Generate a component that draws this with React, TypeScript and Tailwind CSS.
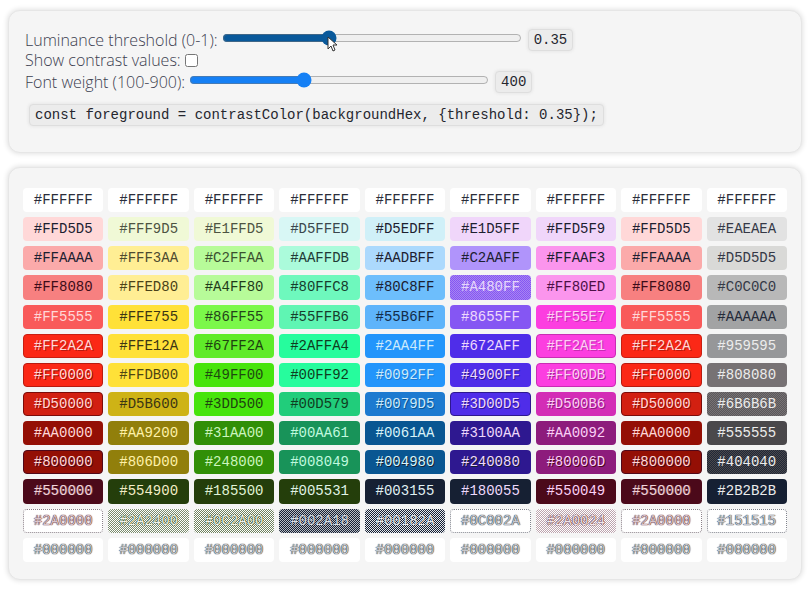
import { useState } from "react";

type Swatch = [hex: string, fill: string];

const dark = "border-transparent text-[#1c2030]";
const white = "border-transparent bg-white text-[#2a2d3a]";
const ghost = "border-transparent bg-white text-[#c8c9cd] [text-shadow:0_0_1px_#222530,0_0_1px_#222530]";
const redGhost = "border-dotted border-[#8a8088] bg-white text-[#d9c6cc] [text-shadow:0_0_1px_#4b091a,0_0_1px_#4b091a]";
const blueGhost = "border-dotted border-[#80838c] bg-white text-[#c8c9d0] [text-shadow:0_0_1px_#162033,0_0_1px_#162033]";

const rows: Swatch[][] = [
  [
    ["#FFFFFF", white],
    ["#FFFFFF", white],
    ["#FFFFFF", white],
    ["#FFFFFF", white],
    ["#FFFFFF", white],
    ["#FFFFFF", white],
    ["#FFFFFF", white],
    ["#FFFFFF", white],
    ["#FFFFFF", white],
  ],
  [
    ["#FFD5D5", `bg-[#ffd8d8] ${dark}`],
    ["#FFF9D5", "border-transparent bg-[#f0f9d6] text-[#4d5342]"],
    ["#E1FFD5", "border-transparent bg-[#f0f9d6] text-[#4d5342]"],
    ["#D5FFED", "border-transparent bg-[#d8f7f5] text-[#3b474d]"],
    ["#D5EDFF", `bg-[#d0f0f8] ${dark}`],
    ["#E1D5FF", `bg-[#f0d6fa] ${dark}`],
    ["#FFD5F9", `bg-[#f0d6fa] ${dark}`],
    ["#FFD5D5", `bg-[#ffd8d8] ${dark}`],
    ["#EAEAEA", "border-transparent bg-[#e2e2e2] text-[#343846]"],
  ],
  [
    ["#FFAAAA", `bg-[#fbaaaa] ${dark}`],
    ["#FFF3AA", "border-transparent bg-[#ffee94] text-[#4d4a30]"],
    ["#C2FFAA", "border-transparent bg-[#b7fb99] text-[#3b5030]"],
    ["#AAFFDB", "border-transparent bg-[#abfbdb] text-[#213a36]"],
    ["#AADBFF", `bg-[#acd9fd] ${dark}`],
    ["#C2AAFF", `bg-[#b094fb] ${dark}`],
    ["#FFAAF3", `bg-[#fb95ed] ${dark}`],
    ["#FFAAAA", `bg-[#fbaaaa] ${dark}`],
    ["#D5D5D5", "border-transparent bg-[#d9d9d7] text-[#343846]"],
  ],
  [
    ["#FF8080", "border-transparent bg-[#f78080] text-[#3d0c18]"],
    ["#FFED80", "border-transparent bg-[#ffee94] text-[#4a4218]"],
    ["#A4FF80", "border-transparent bg-[#b7fb99] text-[#1f3a1a]"],
    ["#80FFC8", "border-transparent bg-[#6ef8bd] text-[#173c2d]"],
    ["#80C8FF", `bg-[#6dbefc] ${dark}`],
    ["#A480FF", "border-transparent bg-[repeating-conic-gradient(#8556f3_0_25%,#a785f2_0_50%)] bg-[length:2px_2px] text-[#e6d6fb]"],
    ["#FF80ED", "border-transparent bg-[#fb95ed] text-[#4c1046]"],
    ["#FF8080", "border-transparent bg-[#f78080] text-[#3d0c18]"],
    ["#C0C0C0", "border-transparent bg-[#b8b8b8] text-[#343846]"],
  ],
  [
    ["#FF5555", "border-transparent bg-[#f95a5a] text-[#ffd8d8]"],
    ["#FFE755", "border-transparent bg-[#ffe138] text-[#3b3514]"],
    ["#86FF55", "border-transparent bg-[#7bf84a] text-[#24441a]"],
    ["#55FFB6", "border-transparent bg-[#5ff5b3] text-[#173c2d]"],
    ["#55B6FF", "border-transparent bg-[#5eb4fb] text-[#122c4a]"],
    ["#8655FF", "border-transparent bg-[#8556f3] text-[#eed9fc]"],
    ["#FF55E7", "border-transparent bg-[#fc3ee0] text-[#fbd0f6] [text-shadow:1px_1px_#c92db3]"],
    ["#FF5555", "border-transparent bg-[#f95a5a] text-[#ffd8d8]"],
    ["#AAAAAA", "border-transparent bg-[#a2a3a4] text-[#242a39]"],
  ],
  [
    ["#FF2A2A", "border-[#c91f12] bg-[#fb2816] text-[#ffd8d8] [text-shadow:1px_1px_#b91b10]"],
    ["#FFE12A", "border-transparent bg-[#ffe138] text-[#3b3514]"],
    ["#67FF2A", "border-transparent bg-[#5feb29] text-[#1e4210]"],
    ["#2AFFA4", "border-transparent bg-[#26fc9d] text-[#103c20]"],
    ["#2AA4FF", "border-transparent bg-[#2295fb] text-[#cdeafc]"],
    ["#672AFF", "border-transparent bg-[#4f2de9] text-[#eed9fc]"],
    ["#FF2AE1", "border-[#c92db3] bg-[#fc3ee0] text-[#fbd0f6] [text-shadow:1px_1px_#c92db3]"],
    ["#FF2A2A", "border-[#c91f12] bg-[#fb2816] text-[#ffd8d8] [text-shadow:1px_1px_#b91b10]"],
    ["#959595", "border-transparent bg-[#969799] text-[#ececec]"],
  ],
  [
    ["#FF0000", "border-[#b91b10] bg-[#fb2816] text-[#ffd8d8] [text-shadow:1px_1px_#940f05]"],
    ["#FFDB00", "border-transparent bg-[#ffe138] text-[#4d4514]"],
    ["#49FF00", "border-transparent bg-[#47e40c] text-[#1e4a10]"],
    ["#00FF92", "border-transparent bg-[#26fc9d] text-[#103c20]"],
    ["#0092FF", "border-transparent bg-[#2295fb] text-[#cdeafc] [text-shadow:1px_1px_#1c7ad0]"],
    ["#4900FF", "border-transparent bg-[#4f2de9] text-[#eed9fc] [text-shadow:1px_1px_#2e1890]"],
    ["#FF00DB", "border-[#c92db3] bg-[#fc3ee0] text-[#fbd0f6] [text-shadow:1px_1px_#a82495]"],
    ["#FF0000", "border-[#b91b10] bg-[#fb2816] text-[#ffd8d8] [text-shadow:1px_1px_#940f05]"],
    ["#808080", "border-transparent bg-[#777274] text-[#ececec]"],
  ],
  [
    ["#D50000", "border-[#7c0c09] bg-[#d22011] text-[#ffd8d8] [text-shadow:1px_1px_#940f05]"],
    ["#D5B600", "border-transparent bg-[#ceb316] text-[#3b3514]"],
    ["#3DD500", "border-transparent bg-[#47e40c] text-[#1e4210]"],
    ["#00D579", "border-transparent bg-[#21cd7b] text-[#103c20]"],
    ["#0079D5", "border-transparent bg-[#1c7ad0] text-[#cdeafc] [text-shadow:1px_1px_#095692]"],
    ["#3D00D5", "border-[#2e1890] bg-[#4f2de9] text-[#eed9fc] [text-shadow:1px_1px_#2e1890]"],
    ["#D500B6", "border-transparent bg-[#d32db6] text-[#fbd0f6] [text-shadow:1px_1px_#8d1c7c]"],
    ["#D50000", "border-[#7c0c09] bg-[#d22011] text-[#ffd8d8] [text-shadow:1px_1px_#940f05]"],
    ["#6B6B6B", "border-transparent bg-[repeating-conic-gradient(#777274_0_25%,#5b585b_0_50%)] bg-[length:2px_2px] text-[#ececec]"],
  ],
  [
    ["#AA0000", "border-transparent bg-[#940f05] text-[#ffd8d8]"],
    ["#AA9200", "border-transparent bg-[#917f0b] text-[#fff1a8]"],
    ["#31AA00", "border-transparent bg-[#318f07] text-[#ccf5be]"],
    ["#00AA61", "border-transparent bg-[#189359] text-[#c0f9df]"],
    ["#0061AA", "border-transparent bg-[#095692] text-[#d8f2f8]"],
    ["#3100AA", "border-transparent bg-[#2e1890] text-[#eed9fc]"],
    ["#AA0092", "border-transparent bg-[#8d1c7c] text-[#fbd0f6]"],
    ["#AA0000", "border-transparent bg-[#940f05] text-[#ffd8d8]"],
    ["#555555", "border-transparent bg-[#4a484b] text-[#ececec]"],
  ],
  [
    ["#800000", "border-[#50091a] bg-[#940f05] text-[#ffd8d8] [text-shadow:1px_1px_#4b091a]"],
    ["#806D00", "border-transparent bg-[#917f0b] text-[#fff1a8]"],
    ["#248000", "border-transparent bg-[#318f07] text-[#ccf5be]"],
    ["#008049", "border-transparent bg-[#189359] text-[#c0f9df]"],
    ["#004980", "border-transparent bg-[#095692] text-[#d8f2f8] [text-shadow:1px_1px_#162033]"],
    ["#240080", "border-transparent bg-[#2e1890] text-[#eed9fc] [text-shadow:1px_1px_#162033]"],
    ["#80006D", "border-transparent bg-[#8d1c7c] text-[#fbd0f6] [text-shadow:1px_1px_#4b091a]"],
    ["#800000", "border-[#50091a] bg-[#940f05] text-[#ffd8d8] [text-shadow:1px_1px_#4b091a]"],
    ["#404040", "border-transparent bg-[repeating-conic-gradient(#4a484b_0_25%,#202838_0_50%)] bg-[length:2px_2px] text-[#ececec]"],
  ],
  [
    ["#550000", "border-transparent bg-[#4b091a] text-[#f2d4da] [text-shadow:1px_0_#ffffff40]"],
    ["#554900", "border-transparent bg-[#243e0b] text-[#f3edc6]"],
    ["#185500", "border-transparent bg-[#243e0b] text-[#e0f3d6]"],
    ["#005531", "border-transparent bg-[#243e0b] text-[#e0f3e6]"],
    ["#003155", "border-transparent bg-[#162033] text-[#e0f0f3]"],
    ["#180055", "border-transparent bg-[#162033] text-[#eed9fc]"],
    ["#550049", "border-transparent bg-[#4b091a] text-[#fbd0f6]"],
    ["#550000", "border-transparent bg-[#4b091a] text-[#f2d4da] [text-shadow:1px_0_#ffffff40]"],
    ["#2B2B2B", "border-transparent bg-[#162033] text-[#ececec]"],
  ],
  [
    ["#2A0000", redGhost],
    ["#2A2400", "border-transparent bg-[repeating-conic-gradient(#ffffff_0_25%,#7b8c6d_0_50%)] bg-[length:2px_2px] text-[#f1f2ed] [text-shadow:0_0_1px_#243e0b,0_0_1px_#243e0b]"],
    ["#0C2A00", "border-transparent bg-[repeating-conic-gradient(#ffffff_0_25%,#6f825e_0_50%)] bg-[length:2px_2px] text-[#f1f2ed] [text-shadow:0_0_1px_#243e0b,0_0_1px_#243e0b]"],
    ["#002A18", "border-transparent bg-[repeating-conic-gradient(#162033_0_25%,#b9bdc4_0_50%)] bg-[length:2px_2px] text-[#d8dce2] [text-shadow:0_0_1px_#162033]"],
    ["#00182A", "border-transparent bg-[repeating-conic-gradient(#162033_0_25%,#e5e8ec_0_50%)] bg-[length:2px_2px] text-[#e5e8ec] [text-shadow:0_0_1px_#162033]"],
    ["#0C002A", blueGhost],
    ["#2A0024", "border-transparent bg-[repeating-conic-gradient(#ffffff_0_25%,#bda4ae_0_50%)] bg-[length:2px_2px] text-[#f1e6ea] [text-shadow:0_0_1px_#4b091a,0_0_1px_#4b091a]"],
    ["#2A0000", redGhost],
    ["#151515", blueGhost],
  ],
  [
    ["#000000", ghost],
    ["#000000", ghost],
    ["#000000", ghost],
    ["#000000", ghost],
    ["#000000", ghost],
    ["#000000", ghost],
    ["#000000", ghost],
    ["#000000", ghost],
    ["#000000", ghost],
  ],
];

const mono = "font-['Liberation_Mono',monospace] text-sm";
const panel = "rounded-xl border border-[#e6e6e6] bg-[#f5f5f5] shadow-[0_0_5px_1px_#e2e2e2]";
const chip = `${mono} rounded border border-[#dedede] bg-[#ececec] px-[5px] leading-5 text-[#25262e] shadow-[0_0_3px_1px_#e8e8e8]`;

function Pointer() {
  return (
    <svg className="pointer-events-none absolute top-2 left-[107px]" width="11" height="17" viewBox="0 0 11 17" aria-hidden="true">
      <path d="M1 1v12l3-3 2 5 2-1-2-5h4z" fill="#fff" stroke="#333" strokeWidth="1" />
    </svg>
  );
}

export default function App() {
  const [threshold, setThreshold] = useState(0.35);
  const [showContrast, setShowContrast] = useState(false);
  const [weight, setWeight] = useState(400);

  return (
    <main className="flex flex-col gap-3.5 px-2 pt-2.5 pb-3 font-['Open_Sans',sans-serif] text-base text-[#3c4050]">
      <section className={`${panel} px-4 pt-[17px] pb-[26px]`}>
        <div className="flex items-center">
          <label htmlFor="threshold" className="font-light leading-5">Luminance threshold (0-1):</label>
          <span className="relative ml-0.5 flex pb-1">
            <input
              id="threshold"
              type="range"
              min="0"
              max="1"
              step="0.01"
              value={threshold}
              onChange={(e) => setThreshold(Number(e.target.value))}
              className="m-0.5 h-4 w-[300px] accent-[#09599b]"
            />
            <Pointer />
          </span>
          <output htmlFor="threshold" className={`${chip} ml-1`}>{threshold}</output>
        </div>
        <div className="flex items-center">
          <label htmlFor="contrast" className="font-light leading-4">Show contrast values:</label>
          <input
            id="contrast"
            type="checkbox"
            checked={showContrast}
            onChange={(e) => setShowContrast(e.target.checked)}
            className="ml-1 size-[13px]"
          />
        </div>
        <div className="mt-0.5 flex items-center">
          <label htmlFor="weight" className="font-light leading-5">Font weight (100-900):</label>
          <span className="ml-0.5 flex pb-1">
            <input
              id="weight"
              type="range"
              min="100"
              max="900"
              step="100"
              value={weight}
              onChange={(e) => setWeight(Number(e.target.value))}
              className="m-0.5 h-4 w-[300px] accent-[#1580f5]"
            />
          </span>
          <output htmlFor="weight" className={`${chip} ml-1`}>{weight}</output>
        </div>
        <div className="mt-2.5 ml-1 flex">
          <code className={chip}>
            {`const foreground = contrastColor(backgroundHex, {threshold: ${threshold}});`}
          </code>
        </div>
      </section>

      <section className={`${panel} px-[9px] pt-[15px] pb-3`}>
        <table className={`${mono} h-[384px] w-full table-fixed border-separate border-spacing-[5px]`}>
          <tbody>
            {rows.map((row, r) => (
              <tr key={r}>
                {row.map(([hex, fill], c) => (
                  <td key={c} className={`rounded border p-0 text-center leading-5 ${fill}`}>
                    {hex}
                  </td>
                ))}
              </tr>
            ))}
          </tbody>
        </table>
      </section>
    </main>
  );
}
